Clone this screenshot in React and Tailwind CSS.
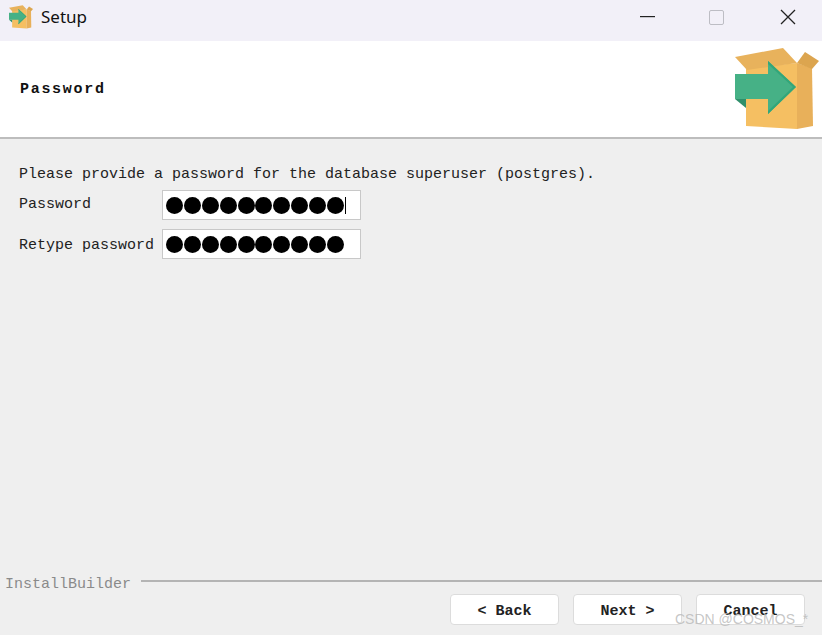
import React from "react";

const mono = "font-['Liberation_Mono',monospace]";

function Dots({ n, caret }) {
  return (
    <div className="flex items-center">
      {Array.from({ length: n }).map((_, i) => (
        <span key={i} className="w-[17.8px] h-[18px] shrink-0 flex items-center justify-center">
          <span className="block w-[17px] h-[17px] rounded-full bg-black" />
        </span>
      ))}
      {caret && <span className="block w-px h-[17px] bg-black ml-[1px]" />}
    </div>
  );
}

function BoxIcon({ className }) {
  return (
    <svg viewBox="0 0 84 82" className={className}>
      <path d="M11 20 L62 15 L62 81 L11 78 Z" fill="#f5bf62" />
      <path d="M62 15 L77 20 L78 78 L62 81 Z" fill="#e8b05a" />
      <path d="M0 9 L48 0 L62 15 L12 22 Z" fill="#e8b25c" />
      <path d="M62 15 L70 4 L84 13 L77 21 Z" fill="#dca54f" />
      <path d="M0 26 L33 26 L33 13 L61 39 L33 66 L33 51 L0 51 Z" fill="#46b186" />
      <path d="M33 13 L61 39 L33 66 L33 63 L58 39 L33 16 Z" fill="#32a67a" />
      <path d="M0 51 L11 51 L11 60 Z" fill="#2f8f6b" />
    </svg>
  );
}

function Btn({ children }) {
  return (
    <button className={`${mono} w-[109px] h-[31px] bg-white border border-[#dcdcdc] rounded-[4px] text-[15px] font-bold text-[#222] flex items-center justify-center whitespace-pre pt-[5px]`}>
      {children}
    </button>
  );
}

export default function App() {
  return (
    <div className="w-[822px] h-[635px] relative flex flex-col overflow-hidden bg-[#efefef]">
      <div className="h-[41px] shrink-0 bg-[#f2f0f8] flex items-center pb-[7px]">
        <BoxIcon className="w-[24px] h-[24px] ml-[9px]" />
        <span className="ml-[8px] text-[17px] text-[#111] font-['Noto_Sans',sans-serif]">Setup</span>
        <div className="ml-auto flex items-center">
          <svg width="15" height="2" className="mr-[54px]"><rect width="15" height="1.2" fill="#222" /></svg>
          <span className="block w-[15px] h-[15px] border border-[#bdbdc4] rounded-[2px] mr-[56px]" />
          <svg width="16" height="16" viewBox="0 0 16 16" className="mr-[26px]">
            <path d="M1 1 L15 15 M15 1 L1 15" stroke="#222" strokeWidth="1.3" />
          </svg>
        </div>
      </div>

      <div className="h-[98px] shrink-0 bg-white border-b-2 border-[#bdbdbd] flex items-center justify-between pl-[20px] pr-[3px]">
        <span className={`${mono} text-[15px] font-bold tracking-[1.7px] text-[#111] mt-[2px]`}>Password</span>
        <BoxIcon className="w-[84px] h-[82px]" />
      </div>

      <div className={`${mono} flex-1 pl-[19px] pt-[27px] text-[15px] text-[#222]`}>
        <div className="leading-[18px] whitespace-pre">Please provide a password for the database superuser (postgres).</div>
        <div className="flex items-center mt-[6px] h-[30px]">
          <span className="w-[143px] leading-[18px]">Password</span>
          <div className="w-[199px] h-[30px] bg-white border border-[#c8c8c8] pl-[3px] flex items-center">
            <Dots n={10} caret />
          </div>
        </div>
        <div className="flex items-center mt-[9px] h-[30px]">
          <span className="w-[143px] leading-[18px] mt-[4px]">Retype password</span>
          <div className="w-[199px] h-[30px] bg-white border border-[#c8c8c8] pl-[3px] flex items-center">
            <Dots n={10} />
          </div>
        </div>
      </div>

      <div className="h-[55px] shrink-0 relative">
        <div className="flex items-center h-[1px] mt-0">
          <span className={`${mono} ml-[5px] mt-[9px] text-[15px] text-[#8a8a8a] leading-[18px] whitespace-pre`}>InstallBuilder</span>
          <div className="flex-1 h-[2px] bg-[#b4b4b4] ml-[10px]" />
        </div>
        <div className="flex justify-end gap-[14px] pr-[17px] mt-[13px]">
          <Btn>{"< Back"}</Btn>
          <Btn>{"Next >"}</Btn>
          <Btn>Cancel</Btn>
        </div>
      </div>

      <span className="absolute left-[675px] top-[611px] text-[14px] leading-[17px] text-[#b8b8b8]/80 font-['Liberation_Sans',sans-serif] whitespace-pre">CSDN @COSMOS_*</span>
    </div>
  );
}
